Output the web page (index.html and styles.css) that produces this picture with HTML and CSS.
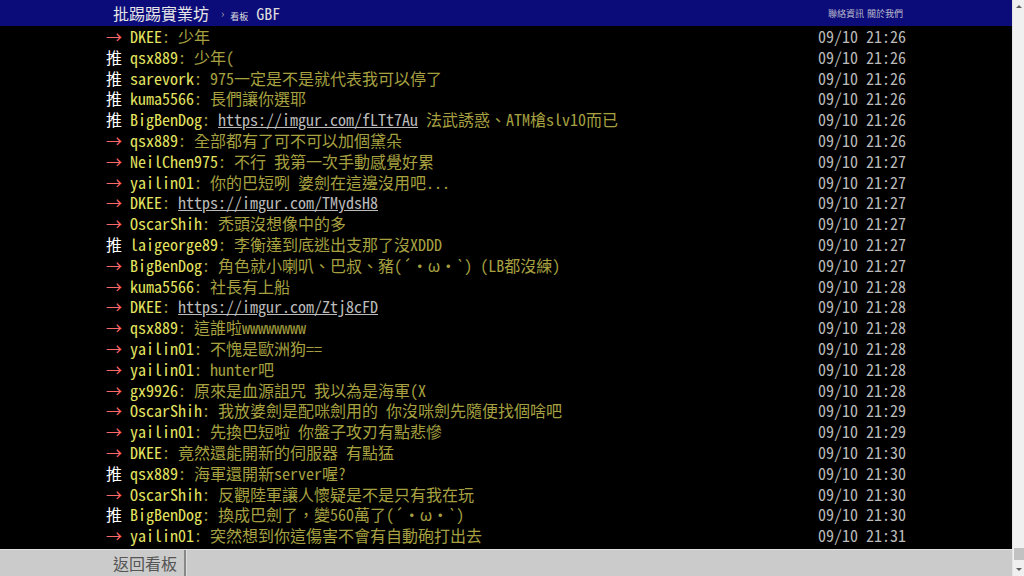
FILE: index.html
```html
<!DOCTYPE html>
<html lang="zh-Hant">
<head>
    <meta charset="UTF-8">
    <meta name="viewport" content="width=device-width, initial-scale=1.0">
    <title>[閒聊] GBF - 看板 GBF - 批踢踢實業坊</title>
    <link rel="stylesheet" href="styles.css">
</head>
<body>
    <div class="page">
        <div class="topbar">
            <div class="wrap topbar-inner">
                <a class="logo">批踢踢實業坊</a>
                <span class="sep">›</span>
                <a class="board"><span class="board-label">看板</span> GBF</a>
                <div class="right-links">
                    <a>聯絡資訊</a>
                    <a>關於我們</a>
                </div>
            </div>
        </div>

        <div class="main">
            <div class="wrap">
                <div class="push"><span class="tag arrow">→ </span><span class="userid">DKEE</span><span class="content">: 少年</span><span class="time">09/10 21:26</span></div>
                <div class="push"><span class="tag">推 </span><span class="userid">qsx889</span><span class="content">: 少年(</span><span class="time">09/10 21:26</span></div>
                <div class="push"><span class="tag">推 </span><span class="userid">sarevork</span><span class="content">: 975一定是不是就代表我可以停了</span><span class="time">09/10 21:26</span></div>
                <div class="push"><span class="tag">推 </span><span class="userid">kuma5566</span><span class="content">: 長們讓你選耶</span><span class="time">09/10 21:26</span></div>
                <div class="push"><span class="tag">推 </span><span class="userid">BigBenDog</span><span class="content">: <a class="link">https://imgur.com/fLTt7Au</a> 法武誘惑、ATM槍slv10而已</span><span class="time">09/10 21:26</span></div>
                <div class="push"><span class="tag arrow">→ </span><span class="userid">qsx889</span><span class="content">: 全部都有了可不可以加個黛朵</span><span class="time">09/10 21:26</span></div>
                <div class="push"><span class="tag arrow">→ </span><span class="userid">NeilChen975</span><span class="content">: 不行 我第一次手動感覺好累</span><span class="time">09/10 21:27</span></div>
                <div class="push"><span class="tag arrow">→ </span><span class="userid">yailin01</span><span class="content">: 你的巴短咧 婆劍在這邊沒用吧...</span><span class="time">09/10 21:27</span></div>
                <div class="push"><span class="tag arrow">→ </span><span class="userid">DKEE</span><span class="content">: <a class="link">https://imgur.com/TMydsH8</a></span><span class="time">09/10 21:27</span></div>
                <div class="push"><span class="tag arrow">→ </span><span class="userid">OscarShih</span><span class="content">: 禿頭沒想像中的多</span><span class="time">09/10 21:27</span></div>
                <div class="push"><span class="tag">推 </span><span class="userid">laigeorge89</span><span class="content">: 李衡達到底逃出支那了沒XDDD</span><span class="time">09/10 21:27</span></div>
                <div class="push"><span class="tag arrow">→ </span><span class="userid">BigBenDog</span><span class="content">: 角色就小喇叭、巴叔、豬(´・ω・`) (LB都沒練)</span><span class="time">09/10 21:27</span></div>
                <div class="push"><span class="tag arrow">→ </span><span class="userid">kuma5566</span><span class="content">: 社長有上船</span><span class="time">09/10 21:28</span></div>
                <div class="push"><span class="tag arrow">→ </span><span class="userid">DKEE</span><span class="content">: <a class="link">https://imgur.com/Ztj8cFD</a></span><span class="time">09/10 21:28</span></div>
                <div class="push"><span class="tag arrow">→ </span><span class="userid">qsx889</span><span class="content">: 這誰啦wwwwwwww</span><span class="time">09/10 21:28</span></div>
                <div class="push"><span class="tag arrow">→ </span><span class="userid">yailin01</span><span class="content">: 不愧是歐洲狗==</span><span class="time">09/10 21:28</span></div>
                <div class="push"><span class="tag arrow">→ </span><span class="userid">yailin01</span><span class="content">: hunter吧</span><span class="time">09/10 21:28</span></div>
                <div class="push"><span class="tag arrow">→ </span><span class="userid">gx9926</span><span class="content">: 原來是血源詛咒 我以為是海軍(X</span><span class="time">09/10 21:28</span></div>
                <div class="push"><span class="tag arrow">→ </span><span class="userid">OscarShih</span><span class="content">: 我放婆劍是配咪劍用的 你沒咪劍先隨便找個啥吧</span><span class="time">09/10 21:29</span></div>
                <div class="push"><span class="tag arrow">→ </span><span class="userid">yailin01</span><span class="content">: 先換巴短啦 你盤子攻刃有點悲慘</span><span class="time">09/10 21:29</span></div>
                <div class="push"><span class="tag arrow">→ </span><span class="userid">DKEE</span><span class="content">: 竟然還能開新的伺服器 有點猛</span><span class="time">09/10 21:30</span></div>
                <div class="push"><span class="tag">推 </span><span class="userid">qsx889</span><span class="content">: 海軍還開新server喔?</span><span class="time">09/10 21:30</span></div>
                <div class="push"><span class="tag arrow">→ </span><span class="userid">OscarShih</span><span class="content">: 反觀陸軍讓人懷疑是不是只有我在玩</span><span class="time">09/10 21:30</span></div>
                <div class="push"><span class="tag">推 </span><span class="userid">BigBenDog</span><span class="content">: 換成巴劍了，變560萬了(´・ω・`)</span><span class="time">09/10 21:30</span></div>
                <div class="push"><span class="tag arrow">→ </span><span class="userid">yailin01</span><span class="content">: 突然想到你這傷害不會有自動砲打出去</span><span class="time">09/10 21:31</span></div>
            </div>
        </div>

        <div class="bottombar">
            <div class="wrap">
                <a class="back-btn">返回看板</a>
            </div>
        </div>
    </div>

    <div class="scrollbar">
        <div class="sb-arrow sb-up"></div>
        <div class="sb-track"></div>
        <div class="sb-thumb"></div>
        <div class="sb-arrow sb-down"></div>
    </div>
</body>
</html>
```

FILE: styles.css
```css
html, body {
    margin: 0;
    height: 100%;
}
body {
    display: flex;
    background-color: #000;
    overflow: hidden;
    font-family: "Noto Sans CJK TC", "Noto Sans CJK SC", sans-serif;
    font-feature-settings: "hwid";
    font-size: 16px;
}
.page {
    flex: 1;
    display: flex;
    flex-direction: column;
    min-width: 0;
}
.wrap {
    width: 800px;
    margin: 0 auto;
}

/* top bar */
.topbar {
    height: 26px;
    flex-shrink: 0;
    background-color: #0b0b7a;
}
.topbar-inner {
    display: flex;
    align-items: center;
    height: 26px;
    color: #ddd;
}
.logo {
    margin-left: 7px;
    font-size: 16px;
    color: #e6e6e6;
}
.sep {
    margin: 0 6px 0 12px;
    font-size: 11px;
    color: #aaa;
}
.board {
    font-size: 16px;
    color: #ddd;
}
.board-label {
    font-size: 9px;
}
.right-links {
    margin-left: auto;
    margin-right: 3px;
    display: flex;
    gap: 3px;
    font-size: 9px;
    color: #bbc;
}

/* push list */
.main {
    flex: 1;
}
.push {
    display: flex;
    height: 20.8px;
    line-height: 20.8px;
    white-space: pre;
}
.push span {
    display: block;
    height: 20.8px;
}
.tag {
    color: #fff;
}
.tag.arrow {
    color: #f66;
}
.userid {
    color: #e4e460;
}
.content {
    color: #a6a040;
}
.link {
    color: #bbb;
    text-decoration: underline;
}
.push .time {
    margin-left: auto;
    color: #bbb;
}

/* bottom bar */
.bottombar {
    height: 27px;
    flex-shrink: 0;
    background-color: #cbcbcb;
    border-top: 1px solid #e0e0e0;
    box-sizing: border-box;
}
.back-btn {
    display: inline-block;
    height: 26px;
    line-height: 26px;
    padding: 0 7px 0 7px;
    color: #555;
    border-right: 2px solid #888;
    box-shadow: 1px 0 0 #ddd;
}

/* fake scrollbar */
.scrollbar {
    width: 12px;
    flex-shrink: 0;
    display: flex;
    flex-direction: column;
    align-items: center;
    background-color: #f0f0f0;
    border-left: 1px solid #e4e4e4;
    box-sizing: border-box;
}
.sb-arrow {
    width: 0;
    height: 0;
    margin: 5px 0;
    border-left: 3px solid transparent;
    border-right: 3px solid transparent;
}
.sb-up {
    border-bottom: 3px solid #606060;
}
.sb-down {
    border-top: 3px solid #606060;
}
.sb-track {
    flex: 1;
}
.sb-thumb {
    width: 10px;
    height: 12px;
    margin-bottom: 3px;
    background-color: #c2c2c2;
}
```
